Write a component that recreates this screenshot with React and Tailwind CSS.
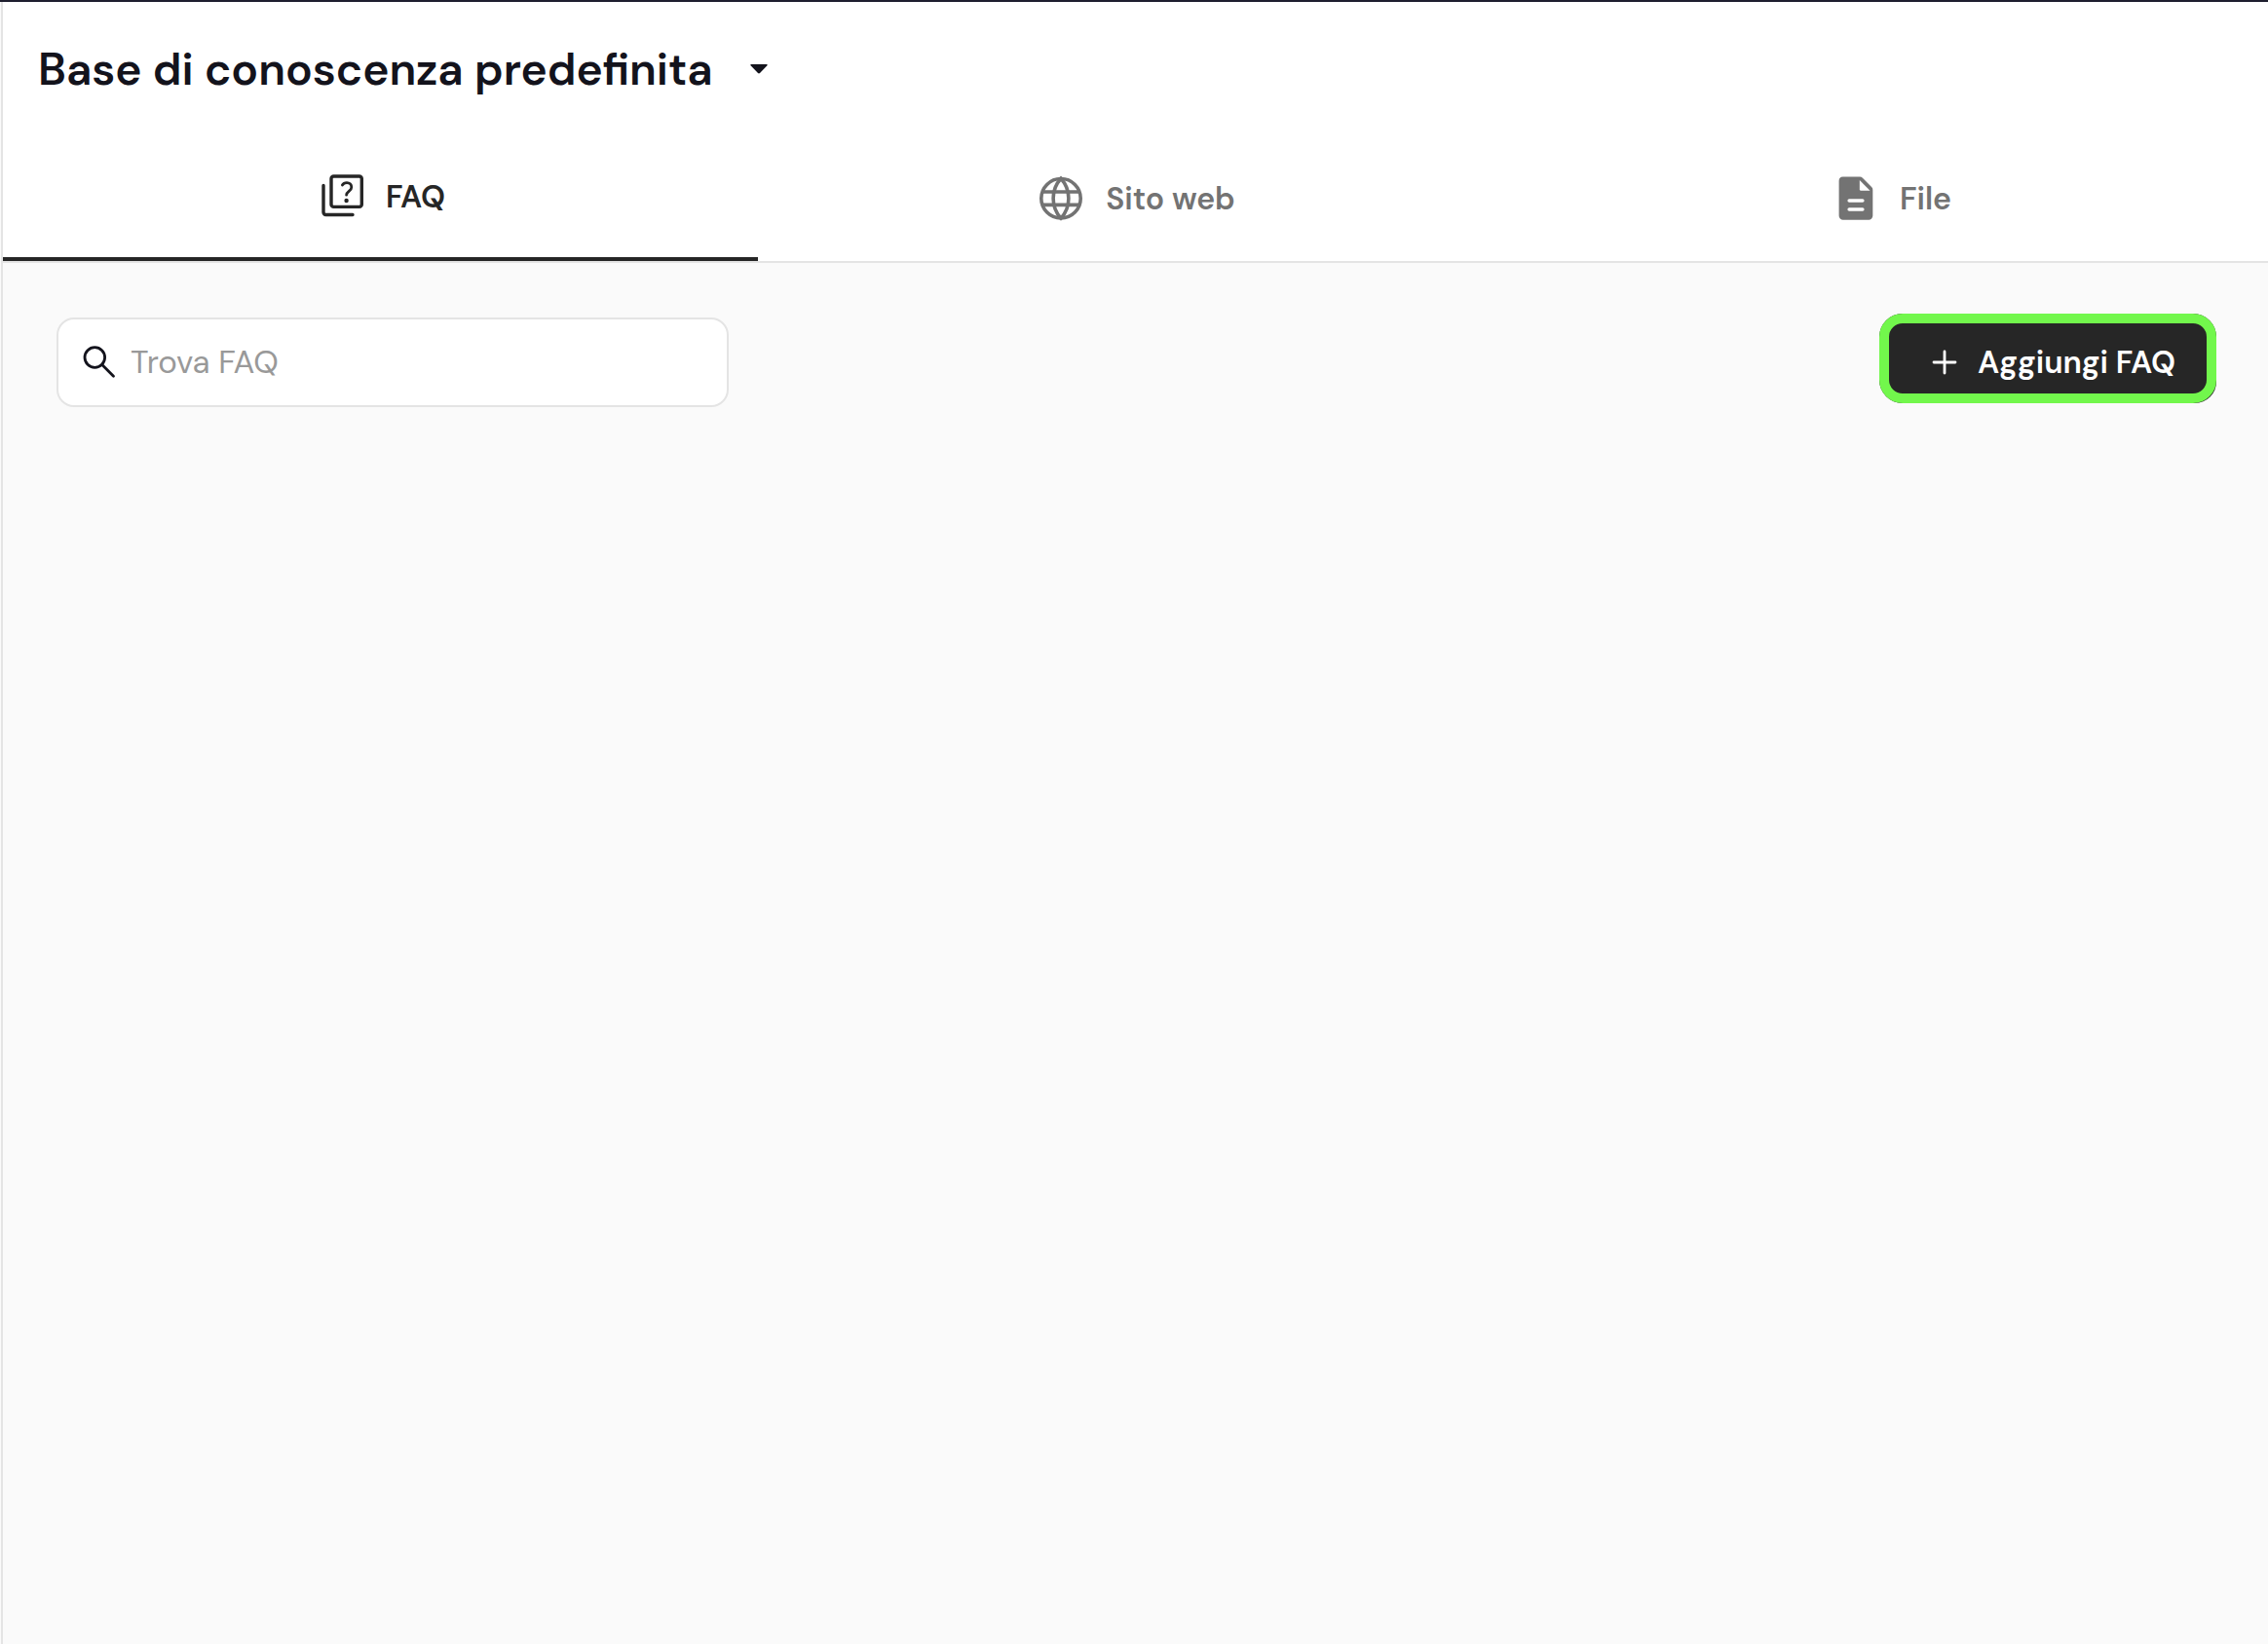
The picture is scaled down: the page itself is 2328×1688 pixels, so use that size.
import React, { useState } from 'react';

const QuizIcon = () => (
  <svg className="size-[52px]" viewBox="0 0 52 52" fill="none" stroke="currentColor" strokeWidth="3.4" strokeLinecap="round" strokeLinejoin="round" aria-hidden="true">
    <rect x="16" y="5" width="31.3" height="31.4" rx="2.5" />
    <path d="M8 14.5V42a2.5 2.5 0 0 0 2.5 2.5H38" />
    <path d="M27.4 14c1-1.8 2.8-2.4 4.6-2.4 2.8 0 4.8 1.8 4.8 4.6 0 4-5.2 4.2-5.2 8" strokeWidth="2.8" />
    <circle cx="31.6" cy="30" r="2.2" fill="currentColor" stroke="none" />
  </svg>
);

const GlobeIcon = () => (
  <svg className="size-[52px]" viewBox="0 0 52 52" fill="none" stroke="currentColor" strokeWidth="3.6" aria-hidden="true">
    <circle cx="26" cy="25.7" r="20.2" />
    <path d="M26 5.3C15.5 17 15.5 34.4 26 46.1C36.5 34.4 36.5 17 26 5.3Z" />
    <path d="M6.5 19H45.5M6.5 32.4H45.5" />
  </svg>
);

const FileIcon = () => (
  <svg className="size-[52px]" viewBox="0 0 52 52" fill="currentColor" aria-hidden="true">
    <path d="M13.6 3.6h17.5a4 4 0 0 1 2.8 1.2l9.2 9.2a4 4 0 0 1 1.2 2.8V43.5a4.2 4.2 0 0 1-4.2 4.2H13.8a4.2 4.2 0 0 1-4.2-4.2V7.8a4.2 4.2 0 0 1 4-4.2z" />
    <path d="M30.8 7v9.2a1.5 1.5 0 0 0 1.5 1.5h9.2z" fill="#fff" />
    <path d="M20.2 28H33.8M20.2 37H33.8" stroke="#fff" strokeWidth="3.6" strokeLinecap="round" />
  </svg>
);

const SearchIcon = () => (
  <svg className="size-9 shrink-0" viewBox="0 0 36 36" fill="none" stroke="#13131c" strokeWidth="2.8" strokeLinecap="round" aria-hidden="true">
    <circle cx="13.3" cy="13" r="10.3" />
    <path d="M20.8 20.6L32.5 32.3" />
  </svg>
);

const PlusIcon = () => (
  <svg className="size-7 shrink-0" viewBox="0 0 28 28" fill="none" stroke="currentColor" strokeWidth="2.8" strokeLinecap="round" aria-hidden="true">
    <path d="M14 3V25M3 14H25" />
  </svg>
);

const TABS = [
  { id: 'faq', label: 'FAQ', Icon: QuizIcon },
  { id: 'web', label: 'Sito web', Icon: GlobeIcon },
  { id: 'file', label: 'File', Icon: FileIcon },
];

const App = () => {
  const [activeTab, setActiveTab] = useState('faq');
  const [query, setQuery] = useState('');

  return (
    <div className="min-h-screen flex flex-col bg-[#fafafa] border-t-2 border-t-[#1e1e2e] pl-px font-['DM_Sans','Inter',sans-serif]">
      <div className="flex-1 flex flex-col border-l-2 border-[#e4e4e4]">
        <header className="bg-white px-9 h-[138px] flex items-center">
          <div className="relative">
            <select
              aria-label="Base di conoscenza"
              className="appearance-none bg-transparent pr-15 text-[46px] leading-[60px] font-semibold text-[#13131c] outline-none"
            >
              <option>Base di conoscenza predefinita</option>
            </select>
            <svg className="absolute right-1 top-1/2 w-[18px] h-[10px] pointer-events-none -translate-y-1/2" viewBox="0 0 18 10" fill="#13131c" aria-hidden="true">
              <path d="M1.2 0h15.6c.9 0 1.2.8.7 1.3L10 9c-.6.6-1.4.6-2 0L.5 1.3C0 .8.3 0 1.2 0z" />
            </svg>
          </div>
        </header>

        <div role="tablist" className="bg-white grid grid-cols-3 border-b-2 border-[#e4e4e4]">
          {TABS.map(({ id, label, Icon }) => (
            <button
              key={id}
              type="button"
              role="tab"
              aria-selected={activeTab === id}
              onClick={() => setActiveTab(id)}
              className={
                activeTab === id
                  ? 'h-32 flex items-center justify-center gap-5 text-[32px] leading-10 font-semibold text-[#262626] border-b-4 border-[#262626]'
                  : 'h-32 flex items-center justify-center gap-5 text-[32px] leading-10 font-semibold text-[#737373]'
              }
            >
              <Icon />
              {label}
            </button>
          ))}
        </div>

        <main className="flex items-start justify-between pt-[52px] pl-[55px] pr-[53px]">
          <label className="mt-1 w-[690px] h-[92px] flex items-center gap-[14px] px-6 bg-white border-2 border-[#e4e4e4] rounded-[18px]">
            <SearchIcon />
            <input
              type="text"
              aria-label="Trova FAQ"
              placeholder="Trova FAQ"
              value={query}
              onChange={(e) => setQuery(e.target.value)}
              className="flex-1 min-w-0 bg-transparent text-[33px] leading-10 text-[#13131c] placeholder:text-[#999999] outline-none"
            />
          </label>

          <button
            type="button"
            className="relative h-[92px] pt-2 pl-[53px] pr-[42px] flex items-center gap-5 bg-[#262626] rounded-3xl rounded-br-[22px] text-[32px] leading-10 font-semibold text-white"
          >
            <PlusIcon />
            Aggiungi FAQ
            <span className="absolute inset-0 border-10 border-[#72f74c] rounded-3xl pointer-events-none" />
          </button>
        </main>
      </div>
    </div>
  );
};

export default App;
